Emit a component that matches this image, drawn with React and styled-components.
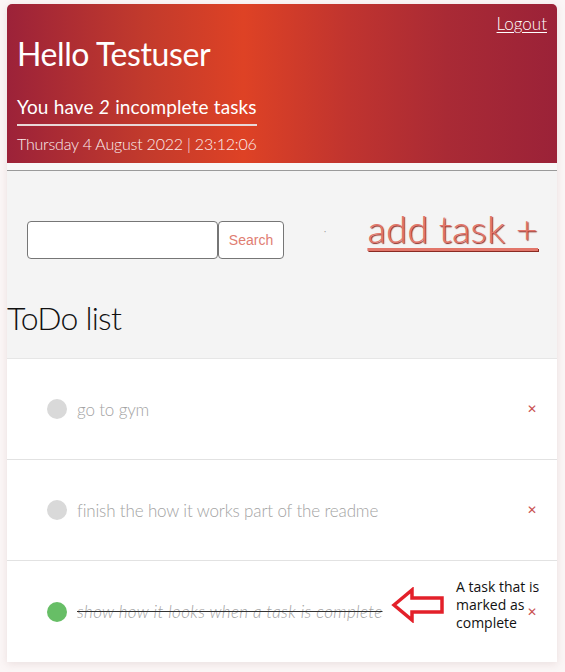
import React from "react";
import styled, { createGlobalStyle } from "styled-components";

const Global = createGlobalStyle`
  html, body { margin: 0; padding: 0; background: #fbf6f6; }
  body { font-family: "Lato", "Open Sans", sans-serif; }
  * { box-sizing: border-box; }
`;

const Page = styled.div`
  padding: 4px 8px 12px 7px;
`;

const Card = styled.div`
  width: 550px;
  border-radius: 5px 5px 0 0;
  overflow: hidden;
  background: #fff;
  box-shadow: 0 2px 8px rgba(160, 120, 120, 0.18);
`;

const Header = styled.header`
  background: linear-gradient(90deg, #9c2239 0%, #c23a2c 25%, #de4225 43%, #c0342f 62%, #a92a35 80%, #9b2238 100%);
  color: #fff;
  padding: 10px 10px 10px 10px;
  height: 159px;
  display: flex;
  flex-direction: column;
`;

const TopRow = styled.div`
  display: flex;
  justify-content: flex-end;
`;

const Logout = styled.a`
  color: #fff;
  font-size: 17px;
  font-weight: 300;
  text-decoration: underline;
  text-underline-offset: 2px;
  line-height: 20px;
`;

const Hello = styled.h1`
  margin: 0;
  font-size: 32px;
  font-weight: 400;
  line-height: 40px;
  letter-spacing: -0.4px;
`;

const Incomplete = styled.div`
  align-self: flex-start;
  margin-top: 21px;
  font-size: 19px;
  font-weight: 400;
  line-height: 24px;
  padding-bottom: 5px;
  border-bottom: 2px solid #e8d8d8;
  letter-spacing: 0.1px;
  word-spacing: 0.3px;
`;

const DateLine = styled.div`
  margin-top: 8px;
  font-size: 16px;
  font-weight: 300;
  line-height: 20px;
  letter-spacing: -0.2px;
  color: #fbeeee;
`;

const Gap = styled.div`
  height: 8px;
  background: #f8f7f7;
  border-bottom: 1px solid #9a9a9a;
`;

const Toolbar = styled.section`
  background: #f4f4f4;
  border-bottom: 1px solid #e6e6e6;
`;

const SearchRow = styled.div`
  height: 120px;
  display: flex;
  align-items: center;
  padding: 0 19px 0 20px;
`;

const SearchForm = styled.form`
  display: flex;
  margin-top: 18px;
`;

const Input = styled.input`
  width: 191px;
  height: 38px;
  border: 1px solid #767676;
  border-radius: 4px;
  background: #fff;
`;

const SearchButton = styled.button`
  width: 66px;
  height: 38px;
  border: 1px solid #767676;
  border-radius: 4px;
  background: #fff;
  color: #df7d72;
  font-family: "Liberation Sans", Arial, sans-serif;
  font-size: 14px;
  padding: 0;
`;

const Dot = styled.span`
  margin-left: 40px;
  font-size: 8px;
  color: #999;
`;

const AddTask = styled.a`
  margin-left: auto;
  margin-top: -6px;
  color: #e2766a;
  font-size: 38px;
  font-weight: 300;
  text-decoration: underline;
  text-decoration-thickness: 3px;
  text-underline-offset: 5px;
  text-shadow: 1px 1px 1px #8a2a22;
  letter-spacing: 0.2px;
`;

const ListTitle = styled.h2`
  margin: 0;
  padding: 7px 0 0 0;
  height: 67px;
  font-size: 32px;
  font-weight: 300;
  color: #111;
  line-height: 40px;
  letter-spacing: -0.8px;
`;

const List = styled.ul`
  list-style: none;
  margin: 0;
  padding: 0;
`;

const Item = styled.li`
  height: 101px;
  display: flex;
  align-items: center;
  padding: 0 20px 0 40px;
  border-bottom: ${(p) => (p.$last ? "none" : "1px solid #e2e2e2")};
  position: relative;
`;

const Check = styled.span`
  width: 20px;
  height: 20px;
  border-radius: 50%;
  background: ${(p) => (p.$done ? "#67be66" : "#d9d9d9")};
  flex-shrink: 0;
`;

const Label = styled.span`
  margin-left: 10px;
  font-size: 17px;
  font-weight: 300;
  color: #a3a3a3;
  font-style: ${(p) => (p.$done ? "italic" : "normal")};
  text-decoration: ${(p) => (p.$done ? "line-through" : "none")};
  text-decoration-color: #333;
  letter-spacing: ${(p) => (p.$done ? "0.35px" : "-0.15px")};
`;

const Remove = styled.span`
  margin-left: auto;
  color: #c9514f;
  font-family: "DejaVu Sans", sans-serif;
  font-size: 12px;
  font-weight: bold;
`;

const Note = styled.div`
  position: absolute;
  left: 384px;
  top: 17px;
  display: flex;
  align-items: center;
  gap: 9px;
`;

const NoteText = styled.div`
  font-family: "Open Sans", "Liberation Sans", sans-serif;
  font-size: 14px;
  line-height: 18px;
  color: #111;
  width: 86px;
`;

const Arrow = () => (
  <svg width="56" height="36" viewBox="0 0 56 36">
    <polygon
      points="3,18 21,3 21,11 51,11 51,25 21,25 21,33"
      fill="none"
      stroke="#e3202a"
      strokeWidth="3.5"
      strokeLinejoin="miter"
    />
  </svg>
);

const tasks = [
  { text: "go to gym", done: false },
  { text: "finish the how it works part of the readme", done: false },
  { text: "show how it looks when a task is complete", done: true },
];

export default function App() {
  return (
    <>
      <Global />
      <Page>
        <Card>
          <Header>
            <TopRow>
              <Logout href="#">Logout</Logout>
            </TopRow>
            <Hello>Hello Testuser</Hello>
            <Incomplete>
              You have <i>2</i> incomplete tasks
            </Incomplete>
            <DateLine>Thursday 4 August 2022 | 23:12:06</DateLine>
          </Header>
          <Gap />
          <Toolbar>
            <SearchRow>
              <SearchForm onSubmit={(e) => e.preventDefault()}>
                <Input type="text" />
                <SearchButton type="submit">Search</SearchButton>
              </SearchForm>
              <Dot>·</Dot>
              <AddTask href="#">add task +</AddTask>
            </SearchRow>
            <ListTitle>ToDo list</ListTitle>
          </Toolbar>
          <List>
            {tasks.map((t, i) => (
              <Item key={i} $last={i === tasks.length - 1}>
                <Check $done={t.done} />
                <Label $done={t.done}>{t.text}</Label>
                {t.done && (
                  <Note>
                    <Arrow />
                    <NoteText>A task that is marked as complete</NoteText>
                  </Note>
                )}
                <Remove>✕</Remove>
              </Item>
            ))}
          </List>
        </Card>
      </Page>
    </>
  );
}
